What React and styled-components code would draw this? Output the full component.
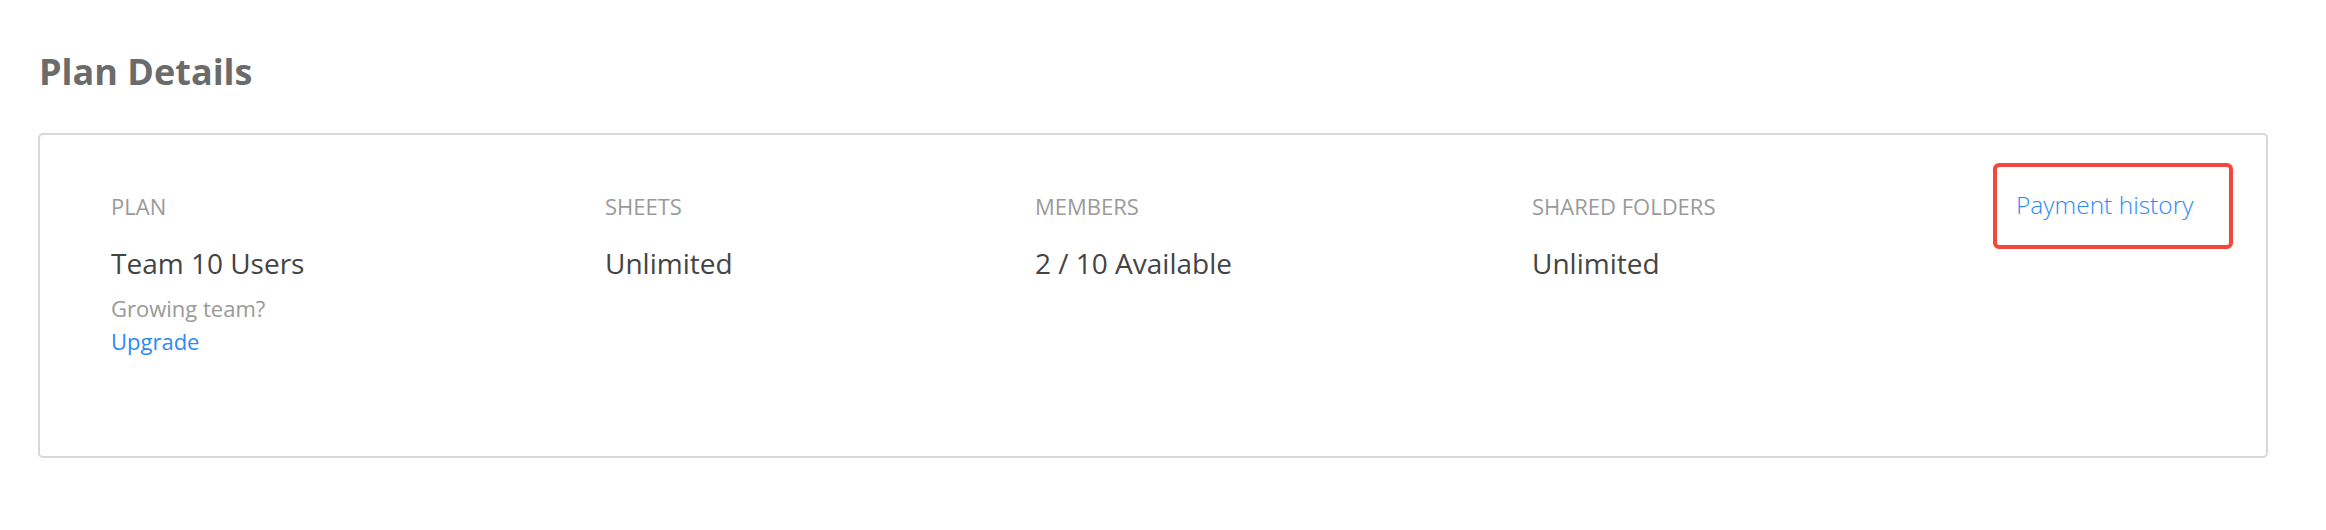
import React from 'react'
import styled, { createGlobalStyle } from 'styled-components'

const GlobalStyle = createGlobalStyle`
    body {
        margin: 0;
        background: #fff;
        font-family: "Open Sans", "Liberation Sans", sans-serif;
    }
`

const Page = styled.div`
    padding: 48px 58px 40px 38px;
`

const Heading = styled.h2`
    margin: 0 0 37px 1px;
    font-size: 36px;
    line-height: 48px;
    font-weight: 700;
    color: #6b6b6b;
`

const Card = styled.div`
    border: 2px solid #d8d8d8;
    border-radius: 5px;
    padding: 28px 30px 102px 71px;
    display: grid;
    grid-template-columns: 494px 430px 497px 461px auto;
    align-items: start;
`

const Column = styled.div`
    display: flex;
    flex-direction: column;
    margin-top: 30px;
`

const Label = styled.div`
    font-size: 22px;
    line-height: 26px;
    color: #9a9a9a;
    text-transform: uppercase;
`

const Value = styled.div`
    margin-top: 28px;
    font-size: 28px;
    line-height: 32px;
    font-weight: 500;
    color: #444;
`

const Note = styled.div`
    margin-top: 16px;
    font-size: 22px;
    line-height: 26px;
    color: #999;
`

const Link = styled.a`
    margin-top: ${props => props.gap || 0}px;
    font-size: ${props => props.size || 22}px;
    line-height: ${props => props.lh || 26}px;
    font-weight: ${props => props.weight || 400};
    color: #2b8af5;
    text-decoration: none;
    cursor: pointer;
`

const Highlight = styled.div`
    justify-self: start;
    border: 4px solid #f4473b;
    border-radius: 6px;
    padding: 24px 36px 26px 19px;
`

const items = [
    { label: 'Plan', value: 'Team 10 Users', extra: true },
    { label: 'Sheets', value: 'Unlimited' },
    { label: 'Members', value: '2 / 10 Available' },
    { label: 'Shared Folders', value: 'Unlimited' },
]

const App = () => {
  return (
    <Page>
        <GlobalStyle />
        <Heading>Plan Details</Heading>
        <Card>
            {items.map(item => (
                <Column key={item.label}>
                    <Label>{item.label}</Label>
                    <Value>{item.value}</Value>
                    {item.extra && (
                        <>
                            <Note>Growing team?</Note>
                            <Link gap={7}>Upgrade</Link>
                        </>
                    )}
                </Column>
            ))}
            <Highlight>
                <Link size={24.5} lh={28} weight={300}>Payment history</Link>
            </Highlight>
        </Card>
    </Page>
  )
}

export default App
